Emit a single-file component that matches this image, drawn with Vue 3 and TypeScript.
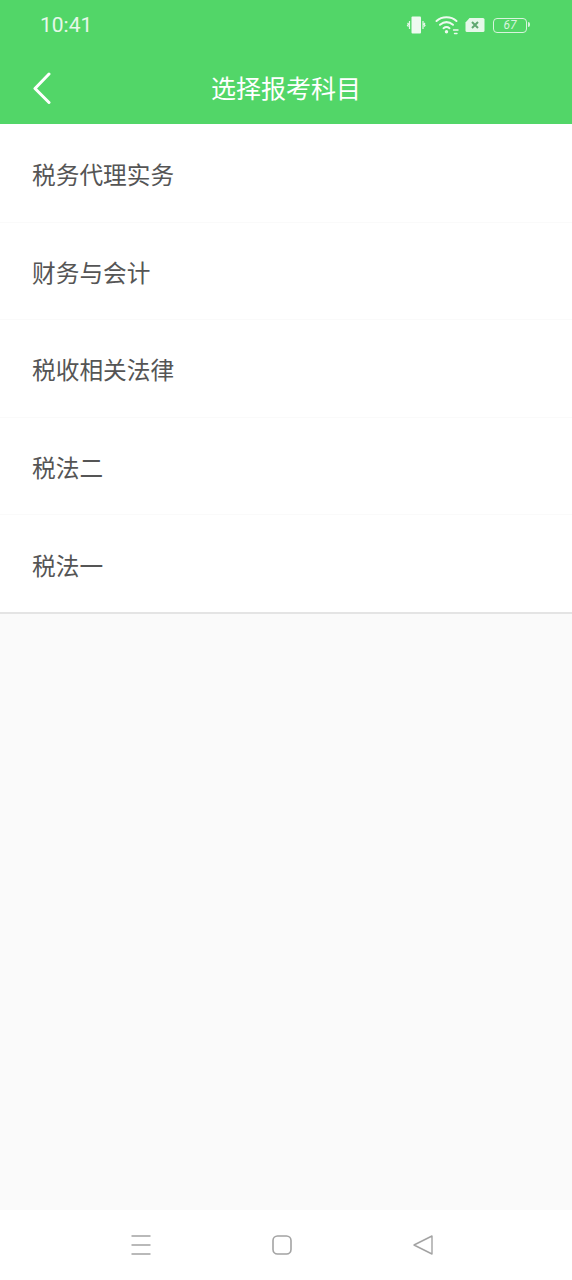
<script setup lang="ts">
const items: string[] = ['税务代理实务', '财务与会计', '税收相关法律', '税法二', '税法一']
</script>

<template>
  <div class="page">
    <header class="head">
      <div class="status">
        <span class="time">10:41</span>
        <div class="icons">
          <svg width="21" height="20" viewBox="0 0 20 20" fill="none" stroke="#e6f8e9" stroke-width="1.2">
            <rect x="5" y="1.500" width="9.500" height="17" rx="1" fill="#eefaf0" stroke="none" />
            <path d="M3 6v8M1 8l1 1-1 1.500 1 1M16.500 6v8M18.500 8l-1 1 1 1.500-1 1" />
          </svg>
          <svg class="wifi" width="24" height="20" viewBox="0 0 24 20" fill="none" stroke="#eefaf0" stroke-width="2" stroke-linecap="round">
            <path d="M1.500 6C7 1 16 1 21.500 6" />
            <path d="M5 9.800C9 6.500 14 6.500 18 9.800" />
            <path d="M8.500 13.200c2-1.500 4-1.500 6 0" />
            <circle cx="11.500" cy="16.800" r="1.700" fill="#eefaf0" stroke="none" />
            <path d="M18.500 15h4.500M19.500 18.500h2.500" stroke-width="1.400" />
          </svg>
          <svg class="sim" width="20" height="16" viewBox="0 0 20 16">
            <path d="M4.500 1H18a1.500 1.500 0 0 1 1.500 1.500V13.500A1.500 1.500 0 0 1 18 15H2a1.500 1.500 0 0 1-1.500-1.500V5.500z" fill="#e6f8e9" />
            <path d="M7 5l6 6M13 5l-6 6" stroke="#5fa870" stroke-width="2" fill="none" />
          </svg>
          <div class="battery"><span class="level">67</span><i class="nub"></i></div>
        </div>
      </div>
      <div class="bar">
        <svg class="back" width="20" height="32" viewBox="0 0 20 32" fill="none" stroke="#fff" stroke-width="3" stroke-linecap="round" stroke-linejoin="round">
          <path d="M17 2L3 16.500 17 30.500" />
        </svg>
        <h1 class="title">选择报考科目</h1>
      </div>
    </header>

    <ul class="list">
      <li v-for="item in items" :key="item" class="row">{{ item }}</li>
    </ul>

    <div class="rest"></div>

    <nav class="nav">
      <svg width="22" height="22" viewBox="0 0 22 22" stroke="#a3a3a3" stroke-width="1.700" fill="none">
        <path d="M1.500 2h19M1.500 11h19M1.500 20h19" />
      </svg>
      <svg width="22" height="22" viewBox="0 0 22 22" stroke="#a3a3a3" stroke-width="1.600" fill="none">
        <rect x="2" y="2" width="18" height="18" rx="4.500" />
      </svg>
      <svg width="22" height="22" viewBox="0 0 22 22" stroke="#a3a3a3" stroke-width="1.400" fill="none" stroke-linejoin="round">
        <path d="M20 2V20L2 11z" />
      </svg>
    </nav>
  </div>
</template>

<style>
html, body { margin: 0; padding: 0; }
</style>

<style scoped>
.page {
  width: 572px;
  height: 1280px;
  display: flex;
  flex-direction: column;
  background: #fafafa;
  font-family: "Noto Sans CJK SC", "Noto Sans", sans-serif;
  overflow: hidden;
}
.head {
  height: 124px;
  flex: none;
  background: #52d668;
  color: #fff;
}
.status {
  height: 50px;
  display: flex;
  align-items: center;
  justify-content: space-between;
  padding: 0 45px 0 40px;
}
.time {
  font-family: Roboto, sans-serif;
  font-size: 21px;
  color: #e6f8e9;
}
.icons {
  display: flex;
  align-items: center;
  gap: 8px;
}
.wifi {
  margin-right: -2px;
}
.battery {
  position: relative;
  box-sizing: border-box;
  width: 34px;
  height: 15px;
  border: 1.500px solid #d8f4dd;
  border-radius: 4px;
  display: flex;
  align-items: center;
  justify-content: center;
}
.level {
  font-family: Roboto, sans-serif;
  font-size: 12px;
  font-style: italic;
  color: #d8f4dd;
  line-height: 1;
}
.nub {
  position: absolute;
  right: -4px;
  top: 3.500px;
  width: 2px;
  height: 5px;
  background: #d8f4dd;
  border-radius: 0 2px 2px 0;
}
.bar {
  position: relative;
  height: 74px;
  display: flex;
  align-items: center;
  justify-content: center;
}
.back {
  position: absolute;
  left: 32px;
  top: 22px;
}
.title {
  margin: 0;
  font-size: 25px;
  font-weight: 400;
  line-height: 1;
}
.list {
  flex: none;
  margin: 0;
  padding: 0;
  list-style: none;
  background: #fff;
  border-bottom: 2px solid #e4e4e4;
}
.row {
  box-sizing: border-box;
  height: 97.600px;
  padding: 2px 0 0 32px;
  display: flex;
  align-items: center;
  font-size: 23.700px;
  color: #555;
  border-top: 1.500px solid #fafafa;
}
.row:first-child {
  border-top: 0;
}
.rest {
  flex: 1;
}
.nav {
  flex: none;
  height: 70px;
  padding-right: 8px;
  background: #fff;
  display: flex;
  align-items: center;
  justify-content: center;
  gap: 119px;
}
</style>
